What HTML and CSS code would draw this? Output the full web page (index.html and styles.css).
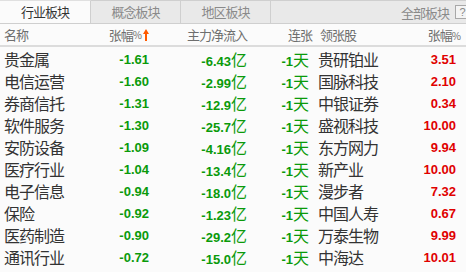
FILE: index.html
```html
<!DOCTYPE html>
<html>
<head>
<meta charset="utf-8">
<link rel="stylesheet" href="styles.css">
</head>
<body>
<div class="panel">
  <div class="tabs">
    <div class="tab active">行业板块</div>
    <div class="tab">概念板块</div>
    <div class="tab">地区板块</div>
    <div class="tab-rest"><span class="all">全部板块</span><span class="help">?</span></div>
  </div>
  <div class="row head">
    <div class="c-name">名称</div>
    <div class="c-pct">张幅<span class="pc">%</span><svg class="arrow" width="6" height="12" viewBox="0 0 6 12"><path d="M3 0 L0 5 H2 V12 H4 V5 H6 Z" fill="#ff5a00"/></svg></div>
    <div class="c-flow">主力净流入</div>
    <div class="c-days h-days">连张</div>
    <div class="c-lead h-lead">领张股</div>
    <div class="c-pct2 h-pct2">张幅<span class="pc">%</span></div>
  </div>
  <div class="body">
    <div class="row"><div class="c-name">贵金属</div><div class="c-pct num g">-1.61</div><div class="c-flow g"><span class="num">-6.43</span><span class="cj">亿</span></div><div class="c-days g"><span class="num">-1</span><span class="cj">天</span></div><div class="c-lead">贵研铂业</div><div class="c-pct2 num r">3.51</div></div>
    <div class="row"><div class="c-name">电信运营</div><div class="c-pct num g">-1.60</div><div class="c-flow g"><span class="num">-2.99</span><span class="cj">亿</span></div><div class="c-days g"><span class="num">-1</span><span class="cj">天</span></div><div class="c-lead">国脉科技</div><div class="c-pct2 num r">2.10</div></div>
    <div class="row"><div class="c-name">券商信托</div><div class="c-pct num g">-1.31</div><div class="c-flow g"><span class="num">-12.9</span><span class="cj">亿</span></div><div class="c-days g"><span class="num">-1</span><span class="cj">天</span></div><div class="c-lead">中银证券</div><div class="c-pct2 num r">0.34</div></div>
    <div class="row"><div class="c-name">软件服务</div><div class="c-pct num g">-1.30</div><div class="c-flow g"><span class="num">-25.7</span><span class="cj">亿</span></div><div class="c-days g"><span class="num">-1</span><span class="cj">天</span></div><div class="c-lead">盛视科技</div><div class="c-pct2 num r">10.00</div></div>
    <div class="row"><div class="c-name">安防设备</div><div class="c-pct num g">-1.09</div><div class="c-flow g"><span class="num">-4.16</span><span class="cj">亿</span></div><div class="c-days g"><span class="num">-1</span><span class="cj">天</span></div><div class="c-lead">东方网力</div><div class="c-pct2 num r">9.94</div></div>
    <div class="row"><div class="c-name">医疗行业</div><div class="c-pct num g">-1.04</div><div class="c-flow g"><span class="num">-13.4</span><span class="cj">亿</span></div><div class="c-days g"><span class="num">-1</span><span class="cj">天</span></div><div class="c-lead">新产业</div><div class="c-pct2 num r">10.00</div></div>
    <div class="row"><div class="c-name">电子信息</div><div class="c-pct num g">-0.94</div><div class="c-flow g"><span class="num">-18.0</span><span class="cj">亿</span></div><div class="c-days g"><span class="num">-1</span><span class="cj">天</span></div><div class="c-lead">漫步者</div><div class="c-pct2 num r">7.32</div></div>
    <div class="row"><div class="c-name">保险</div><div class="c-pct num g">-0.92</div><div class="c-flow g"><span class="num">-1.23</span><span class="cj">亿</span></div><div class="c-days g"><span class="num">-1</span><span class="cj">天</span></div><div class="c-lead">中国人寿</div><div class="c-pct2 num r">0.67</div></div>
    <div class="row"><div class="c-name">医药制造</div><div class="c-pct num g">-0.90</div><div class="c-flow g"><span class="num">-29.2</span><span class="cj">亿</span></div><div class="c-days g"><span class="num">-1</span><span class="cj">天</span></div><div class="c-lead">万泰生物</div><div class="c-pct2 num r">9.99</div></div>
    <div class="row"><div class="c-name">通讯行业</div><div class="c-pct num g">-0.72</div><div class="c-flow g"><span class="num">-15.0</span><span class="cj">亿</span></div><div class="c-days g"><span class="num">-1</span><span class="cj">天</span></div><div class="c-lead">中海达</div><div class="c-pct2 num r">10.01</div></div>
  </div>
</div>
</body>
</html>
```

FILE: styles.css
```css
html, body {
  margin: 0;
  padding: 0;
  background: #fbfbfb;
}
body {
  width: 466px;
  height: 272px;
  overflow: hidden;
  font-family: "Noto Sans CJK SC", "Liberation Sans", sans-serif;
  color: #333;
}
.panel {
  width: 466px;
}
.tabs {
  display: flex;
  height: 23px;
  border-bottom: 1px solid #cfcfcf;
  background: #e9e9e9;
}
.tab {
  width: 90px;
  box-sizing: border-box;
  border-top: 1px solid #cfcfcf;
  border-right: 1px solid #cfcfcf;
  text-align: center;
  font-size: 13px;
  letter-spacing: -1px;
  line-height: 22px;
  color: #8a8a8a;
  background: #e9e9e9;
}
.tab:first-child { width: 91px; }
.tab.active {
  background: #fbfbfb;
  color: #333;
  border-top-color: #e0e0e0;
}
.tab-rest {
  flex: 1;
  display: flex;
  justify-content: flex-end;
  align-items: center;
  border-top: 1px solid #cfcfcf;
  color: #8a8a8a;
  font-size: 13px;
  letter-spacing: -1px;
}
.all { margin-right: 6px; }
.help {
  box-sizing: border-box;
  width: 14px;
  height: 14px;
  border: 1px solid #a8a8a8;
  border-right: none;
  font-family: "Liberation Sans", sans-serif;
  font-size: 11px;
  line-height: 12px;
  text-align: center;
  letter-spacing: 0;
  color: #888;
  background: #f4f4f4;
  margin-right: -3px;
}
.row {
  display: grid;
  grid-template-columns: 100px 50px 97px 62px 91px 56px;
  height: 22px;
  align-items: center;
}
.row.head {
  border-bottom: 2px solid #dcdcdc;
  height: 21px;
  font-size: 13px;
  letter-spacing: -1px;
  color: #6e6e6e;
}
.body .row {
  font-size: 16px;
  letter-spacing: -1px;
}
.c-name { padding-left: 4px; white-space: nowrap; }
.c-pct { text-align: right; padding-right: 1px; white-space: nowrap; }
.c-flow { text-align: right; white-space: nowrap; }
.c-days { text-align: right; white-space: nowrap; }
.c-lead { padding-left: 9px; white-space: nowrap; color: #333; }
.c-pct2 { text-align: right; white-space: nowrap; }
.h-days { margin-right: -3px; }
.h-lead { padding-left: 11px; color: #6e6e6e; }
.h-pct2 { margin-right: -5px; }
.head .c-pct { display: flex; justify-content: flex-end; align-items: center; }
.pc { font-size: 10px; letter-spacing: 0; }
.arrow { margin-left: 1px; display: block; }
.num {
  font-family: "Liberation Sans", sans-serif;
  font-weight: bold;
  font-size: 13px;
  letter-spacing: 0;
}
.cj { font-size: 16px; letter-spacing: 0; }
.g { color: #0a9a0a; }
.r { color: #e00000; }
```
